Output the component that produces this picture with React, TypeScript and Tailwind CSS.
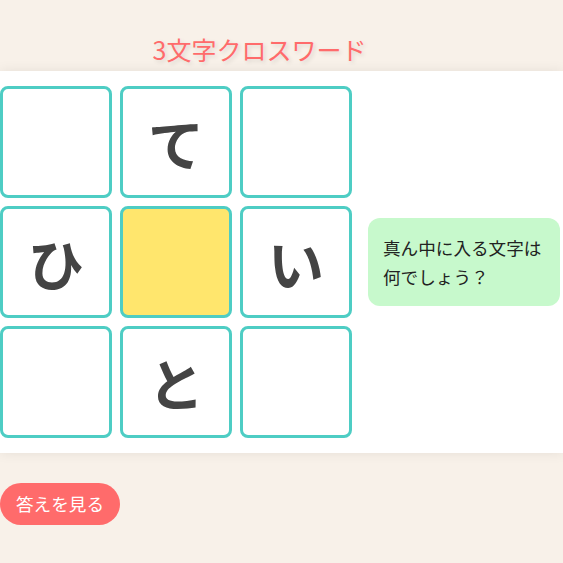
const cells = ['', 'て', '', 'ひ', '?', 'い', '', 'と', ''];

export default function App() {
  return (
    <div
      className="min-h-[563px] w-full bg-[#f8f1e9] text-[#333]"
      style={{ fontFamily: '"Noto Sans CJK JP", "Noto Sans", sans-serif' }}
    >
      <header className="h-[71px] pt-[37px] pr-[44px] text-center">
        <h1 className="text-[25px] leading-none text-[#ff6b6b] [text-shadow:2px_2px_4px_rgba(0,0,0,0.12)]">
          3文字クロスワード
        </h1>
      </header>

      <main className="flex items-center gap-4 bg-white py-[15px] shadow-[0_0_12px_rgba(0,0,0,0.08)]">
        <div className="grid grid-cols-[repeat(3,112px)] gap-2">
          {cells.map((ch, i) =>
            ch === '?' ? (
              <div
                key={i}
                className="h-[112px] rounded-lg border-[3px] border-[#4ecdc4] bg-[#ffe66d]"
              />
            ) : (
              <div
                key={i}
                className="flex h-[112px] items-center justify-center rounded-lg border-[3px] border-[#4ecdc4] bg-white text-[56px] font-bold leading-none text-[#444]"
              >
                {ch}
              </div>
            )
          )}
        </div>

        <div className="w-[192px] rounded-xl bg-[#c7f9cc] p-[15px] text-[17.6px] leading-[29px] text-[#222]">
          真ん中に入る文字は
          <br />
          何でしょう？
        </div>
      </main>

      <div className="pt-[30px]">
        <button className="h-[42px] rounded-full bg-[#ff6b6b] px-[16px] text-[17.6px] text-white">
          答えを見る
        </button>
      </div>
    </div>
  );
}
